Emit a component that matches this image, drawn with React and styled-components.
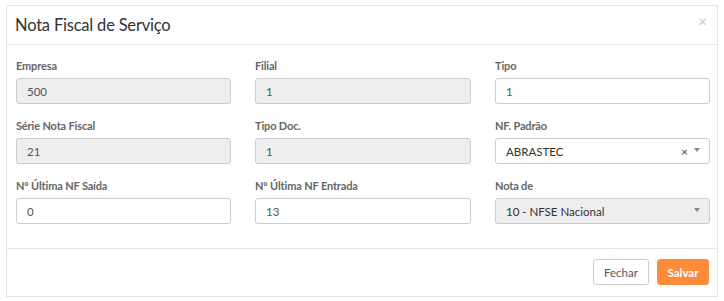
import React from "react";
import styled, { createGlobalStyle } from "styled-components";

const Global = createGlobalStyle`
  html, body { margin: 0; padding: 0; background: #fff; }
  body { font-family: Lato, "Open Sans", sans-serif; }
  * { box-sizing: border-box; }
`;

const Page = styled.div`
  width: 724px;
  height: 301px;
  padding: 5px 6px 0 6px;
`;

const Modal = styled.div`
  width: 712px;
  height: 292px;
  border: 1px solid #e5e5e5;
  display: flex;
  flex-direction: column;
  background: #fff;
`;

const Header = styled.div`
  height: 39px;
  border-bottom: 1px solid #e5e5e5;
  display: flex;
  align-items: center;
  justify-content: space-between;
  padding: 0 10px 1px 8px;
`;

const Title = styled.h4`
  margin: 0;
  font-size: 16.5px;
  font-weight: 400;
  color: #333;
  letter-spacing: -0.2px;
`;

const Close = styled.span`
  font-size: 15px;
  color: #c8c8c8;
  line-height: 1;
  margin-top: -6px;
`;

const Body = styled.div`
  flex: 1;
  display: grid;
  grid-template-columns: 215px 216px 215px;
  column-gap: 24px;
  row-gap: 0;
  padding: 11px 8px 0 9px;
  border-bottom: 1px solid #e5e5e5;
  align-content: start;
`;

const Field = styled.div`
  display: flex;
  flex-direction: column;
  height: 60px;
`;

const Label = styled.label`
  font-size: 11px;
  font-weight: 700;
  color: #666;
  height: 22px;
  line-height: 20px;
  letter-spacing: -0.15px;
`;

const Input = styled.div`
  height: 26px;
  border: 1px solid #ccc;
  border-radius: 3px;
  background: ${(p) => (p.$disabled ? "#eee" : "#fff")};
  display: flex;
  align-items: center;
  padding: 0 9px 0 10px;
  font-size: 11.5px;
  color: #555;
`;

const Value = styled.span`
  flex: 1;
  color: ${(p) => (p.$dark ? "#333" : "#555")};
`;

const Clear = styled.span`
  font-size: 12px;
  color: #444;
  margin-right: 6px;
  margin-top: 1px;
`;

const Caret = styled.span`
  width: 0;
  height: 0;
  border-left: 3px solid transparent;
  border-right: 3px solid transparent;
  border-top: 4px solid #888;
  margin-top: -3px;
`;

const Footer = styled.div`
  height: 47px;
  display: flex;
  justify-content: flex-end;
  align-items: center;
  gap: 8px;
  padding: 0 8px 1px 0;
`;

const Button = styled.button`
  height: 26px;
  padding: 0 9px;
  border-radius: 3px;
  font-family: Lato, "Open Sans", sans-serif;
  font-size: 11.5px;
  font-weight: ${(p) => (p.$primary ? 700 : 400)};
  border: 1px solid ${(p) => (p.$primary ? "#fd8c3a" : "#ccc")};
  background: ${(p) => (p.$primary ? "#fd8c3a" : "#fff")};
  color: ${(p) => (p.$primary ? "#fff" : "#555")};
  width: ${(p) => p.$w}px;
`;

const fields = [
  { label: "Empresa", value: "500", disabled: true },
  { label: "Filial", value: "1", disabled: true },
  { label: "Tipo", value: "1" },
  { label: "Série Nota Fiscal", value: "21", disabled: true },
  { label: "Tipo Doc.", value: "1", disabled: true },
  { label: "NF. Padrão", value: "ABRASTEC", select: true, clear: true },
  { label: "Nº Última NF Saída", value: "0" },
  { label: "Nº Última NF Entrada", value: "13" },
  { label: "Nota de", value: "10 - NFSE Nacional", select: true, disabled: true },
];

export default function App() {
  return (
    <Page>
      <Global />
      <Modal>
        <Header>
          <Title>Nota Fiscal de Serviço</Title>
          <Close>×</Close>
        </Header>
        <Body>
          {fields.map((f) => (
            <Field key={f.label}>
              <Label>{f.label}</Label>
              <Input $disabled={f.disabled}>
                <Value $dark={f.select}>{f.value}</Value>
                {f.clear && <Clear>×</Clear>}
                {f.select && <Caret />}
              </Input>
            </Field>
          ))}
        </Body>
        <Footer>
          <Button $w={56}>Fechar</Button>
          <Button $primary $w={52}>Salvar</Button>
        </Footer>
      </Modal>
    </Page>
  );
}
